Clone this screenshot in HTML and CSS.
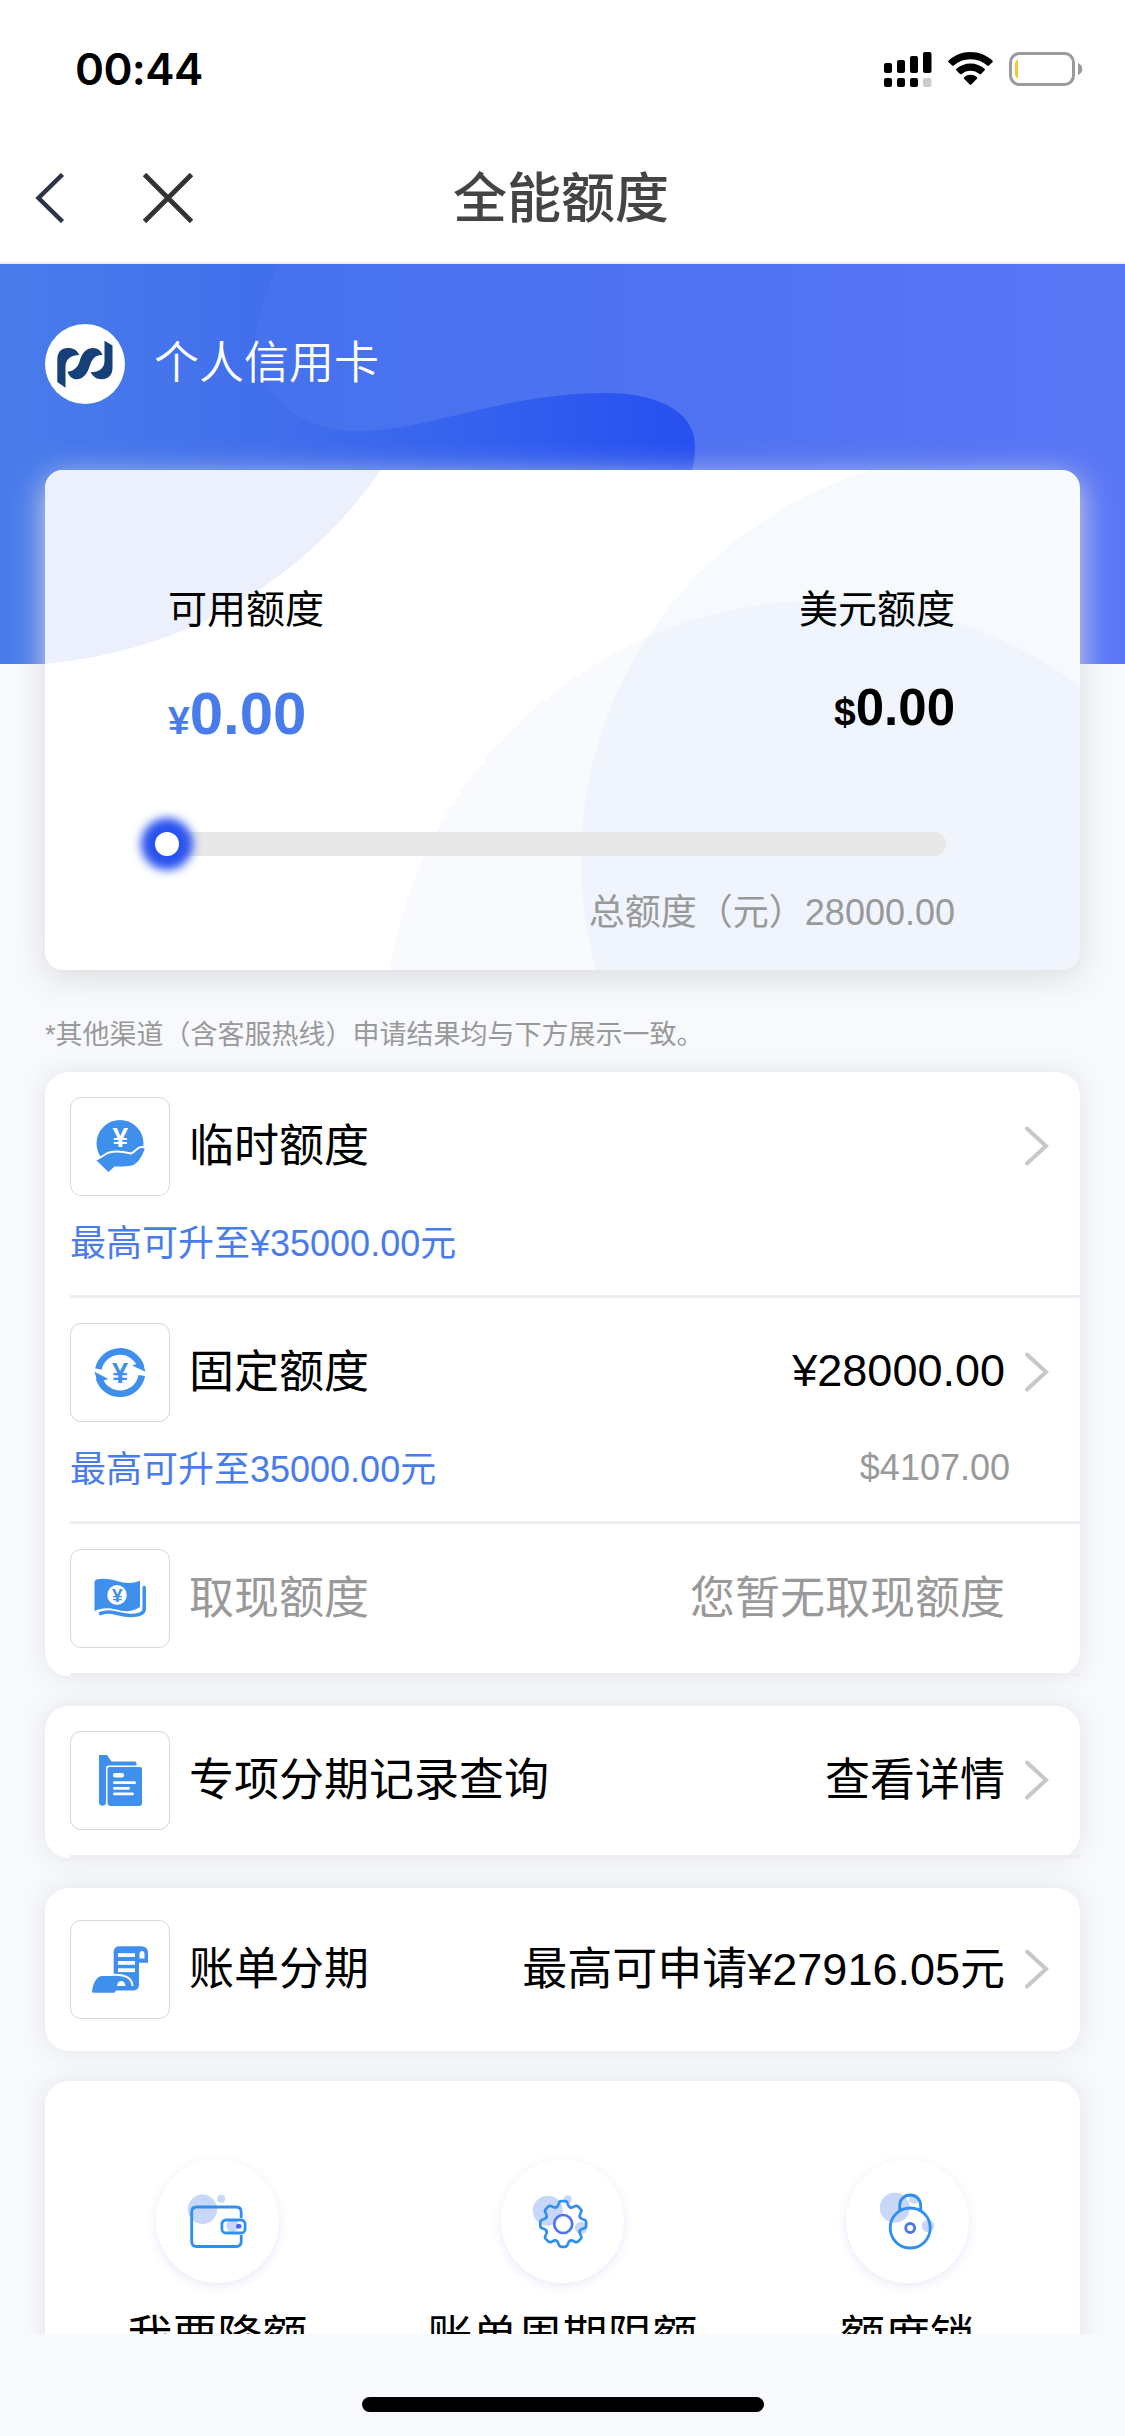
FILE: index.html
```html
<!DOCTYPE html>
<html lang="zh-CN">
<head>
<meta charset="utf-8">
<title>全能额度</title>
<link rel="stylesheet" href="styles.css">
</head>
<body>
<div class="phone">
  <header class="status">
    <span class="status-time">00:44</span>
    <span class="status-icons">
      <svg width="48" height="38" viewBox="0 0 48 38">
        <g fill="#000">
          <rect x="0" y="13" width="8" height="10" rx="2"/><rect x="13" y="10" width="8" height="13" rx="2"/><rect x="26" y="6" width="8" height="17" rx="2"/><rect x="39" y="2" width="8.500" height="21" rx="2"/>
          <rect x="0" y="28" width="8" height="9" rx="2"/><rect x="13" y="28" width="8" height="9" rx="2"/><rect x="26" y="28" width="8" height="9" rx="2"/>
        </g>
        <rect x="39" y="28" width="8.500" height="9" rx="2" fill="#ccc"/>
      </svg>
      <svg width="45" height="34" viewBox="0 0 45 34">
        <path d="M22.500 0C31 0 38.500 3.200 44.300 8.500a1.200 1.200 0 0 1 0 1.800l-3.400 3.300a1.200 1.200 0 0 1-1.700 0A24.500 24.500 0 0 0 22.500 7.200 24.500 24.500 0 0 0 5.800 13.600a1.200 1.200 0 0 1-1.700 0L.7 10.300a1.200 1.200 0 0 1 0-1.800C6.500 3.200 14 0 22.500 0z"/>
        <path d="M22.500 11.500c5.300 0 10.200 2 14 5.300a1.200 1.200 0 0 1 0 1.800l-3.500 3.400a1.200 1.200 0 0 1-1.600 0 13.500 13.500 0 0 0-17.800 0 1.200 1.200 0 0 1-1.600 0l-3.500-3.400a1.200 1.200 0 0 1 0-1.800c3.800-3.300 8.700-5.300 14-5.300z"/>
        <path d="M22.500 22.800c2.300 0 4.500.8 6.200 2.200a1.200 1.200 0 0 1 0 1.900l-5.400 5.500a1.200 1.200 0 0 1-1.600 0l-5.400-5.500a1.200 1.200 0 0 1 0-1.900 9.800 9.800 0 0 1 6.200-2.200z"/>
      </svg>
      <svg width="74" height="34" viewBox="0 0 74 34">
        <rect x="1.500" y="1.500" width="63" height="31" rx="9" fill="none" stroke="#9b9b9b" stroke-width="3"/>
        <path d="M69 11v12c2.600-1 4.300-3.300 4.300-6s-1.700-5-4.300-6z" fill="#9b9b9b"/>
        <path d="M9 7.500v19q-3-1-3-5v-9q0-4 3-5z" fill="#fbc72f"/>
      </svg>
    </span>
  </header>

  <nav class="nav">
    <span class="nav-actions">
      <svg width="30" height="50" viewBox="0 0 30 50"><path d="M27.500 1.500 3.500 25l24 23.500" fill="none" stroke="#2e3448" stroke-width="4.500"/></svg>
      <svg width="50" height="50" viewBox="0 0 50 50"><path d="M1.500 1.500l47 47M48.500 1.500l-47 47" fill="none" stroke="#333" stroke-width="4.800"/></svg>
    </span>
    <h1 class="nav-title">全能额度</h1>
  </nav>

  <main class="content">
    <section class="hero">
      <svg class="hero-art" width="1125" height="400" viewBox="0 0 1125 400">
        <defs>
          <linearGradient id="sky" x1="0" y1="0" x2="1" y2="0"><stop offset="0" stop-color="#497ceb"/><stop offset=".25" stop-color="#416eec"/><stop offset=".45" stop-color="#335fef"/><stop offset=".62" stop-color="#264ff0"/></linearGradient>
          <linearGradient id="wave" x1="0" y1="0" x2="1" y2="0"><stop offset="0" stop-color="#4672ed"/><stop offset=".5" stop-color="#4f72f1"/><stop offset="1" stop-color="#5a77f6"/></linearGradient>
        </defs>
        <rect width="1125" height="400" fill="url(#sky)"/>
        <path d="M280 0C260 35 251 75 260 102C270 140 305 167 358 167C430 167 500 129 606 129C655 129 695 146 695 182C695 235 650 300 640 400H1125V0z" fill="url(#wave)"/>
      </svg>
      <div class="owner">
        <svg width="80" height="80" viewBox="0 0 80 80">
          <circle cx="40" cy="40" r="40" fill="#fff"/>
          <g fill="#173f78">
            <path d="M12.300 36C12.300 28 16 24 23 24C29 24 32 26.500 34.300 31C26 31 20.500 35 20.500 43V63.700L12.300 58z"/>
            <path d="M22.500 47.700C30 47 33.500 42 35 36C37.500 28 42 24 48 24C53 24 56 27 57.500 31C48 31 46.500 37 44 44C41.500 51 37 55.300 32 55.300C27 55.300 24 52 22.500 47.700z"/>
            <path d="M59.500 16.700L67.500 21.500V44C67.500 51 63 55.300 57 55.300C51 55.300 48 52.500 45.500 48.300C54 48.500 59.500 44 59.500 37z"/>
          </g>
        </svg>
        <span>个人信用卡</span>
      </div>
    </section>

    <section class="quota">
      <svg class="quota-art" width="1035" height="500" viewBox="45 470 1035 500">
        <circle cx="10" cy="215" r="450" fill="#ecf0fc"/>
        <circle cx="988" cy="860" r="407" fill="#5591eb" fill-opacity=".05"/>
        <circle cx="821" cy="1037" r="436" fill="#5591eb" fill-opacity=".045"/>
      </svg>
      <div class="quota-row">
        <div>
          <div class="quota-label">可用额度</div>
          <div class="quota-cny"><small>¥</small>0.00</div>
        </div>
        <div class="quota-right">
          <div class="quota-label">美元额度</div>
          <div class="quota-usd"><small>$</small>0.00</div>
        </div>
      </div>
      <div class="track"><span class="thumb"></span></div>
      <div class="total">总额度（元）28000.00</div>
    </section>

    <p class="note">*其他渠道（含客服热线）申请结果均与下方展示一致。</p>

    <section class="card">
      <div class="item item-tall">
        <div class="line">
          <span class="tile"><svg width="100" height="99" viewBox="0 0 100 99">
            <circle cx="50" cy="46.500" r="23.500" fill="#3f8fec"/>
            <path d="M35 57.500C42 52.500 53 54.500 61 56.500C65 55 67 50.500 71 50C74 49.600 76 50.500 75.500 52.500C73 60 70 65 64 69C58 71.500 50 70 44.800 70.500L38.500 76.500L25 63.500C28 62 31 60 35 57.500z" fill="#3f8fec" stroke="#fff" stroke-width="2"/>
            <text x="50.200" y="50.300" class="yen" font-size="28" fill="#fff">¥</text>
          </svg></span>
          <span class="name">临时额度</span>
          <svg class="chev" width="26" height="42" viewBox="0 0 26 42"><path d="M3 2.500l19 17.500L3 37.500"/></svg>
        </div>
        <div class="sub"><span>最高可升至¥35000.00元</span></div>
      </div>
      <div class="item item-tall">
        <div class="line">
          <span class="tile"><svg width="100" height="99" viewBox="0 0 100 99">
            <g fill="none" stroke="#3f8fec" stroke-width="6.600"><path d="M28.400 46A22 22 0 0 1 71 44"/><path d="M71.800 52.500A22 22 0 0 1 29 55"/></g>
            <g fill="#3f8fec"><path d="M62 42.500L72.500 39L75.500 48.700z"/><path d="M38.300 56L27.500 59.500L24.500 48.700z"/></g>
            <text x="50" y="59.700" class="yen" font-size="29" fill="#3f8fec">¥</text>
          </svg></span>
          <span class="name">固定额度</span>
          <span class="value value-number">¥28000.00</span>
          <svg class="chev" width="26" height="42" viewBox="0 0 26 42"><path d="M3 2.500l19 17.500L3 37.500"/></svg>
        </div>
        <div class="sub"><span>最高可升至35000.00元</span><span class="usd">$4107.00</span></div>
      </div>
      <div class="item">
        <div class="line muted">
          <span class="tile"><svg width="100" height="99" viewBox="0 0 100 99">
            <path d="M24.500 33Q24.500 29.700 33 29.700C44 29.700 50 34 59 34Q64 34 70 31.700V58C60 64.500 52 62 46 60.500C38 58.500 32 58.500 24.500 62z" fill="#3f8fec"/>
            <ellipse cx="47" cy="46" rx="9.800" ry="10" fill="#fff"/>
            <text x="47.200" y="52.700" class="yen" font-size="19" fill="#3f8fec">¥</text>
            <path d="M74.200 38.500V60C74.200 64.500 69 66.500 60 66.500C47 66 42 60.500 30.500 64.500" fill="none" stroke="#3f8fec" stroke-width="3.500" stroke-linecap="round"/>
          </svg></span>
          <span class="name">取现额度</span>
          <span class="value value-plain">您暂无取现额度</span>
        </div>
      </div>
    </section>

    <section class="card">
      <div class="item">
        <div class="line">
          <span class="tile"><svg width="100" height="99" viewBox="0 0 100 99">
            <path d="M29 24H37L41.500 30.500H65Q66.600 30.500 66.600 33V34.500H38.500Q36 34.500 36 37V71Q36 74.700 32.500 74.700Q29 74.700 29 71z" fill="#3f8fec"/>
            <path d="M40 36H70Q72 36 72 38V72Q72 75 69 75H39.500L37.500 73V38Q37.500 36 40 36z" fill="#3f8fec"/>
            <g fill="#fff"><rect x="43" y="42" width="11" height="4.500" rx="2"/><rect x="43" y="50.300" width="23" height="2.800" rx="1.400"/><rect x="43" y="56" width="17" height="2.800" rx="1.400"/><rect x="43" y="61.500" width="21" height="2.800" rx="1.400"/></g>
          </svg></span>
          <span class="name">专项分期记录查询</span>
          <span class="value">查看详情</span>
          <svg class="chev" width="26" height="42" viewBox="0 0 26 42"><path d="M3 2.500l19 17.500L3 37.500"/></svg>
        </div>
      </div>
    </section>

    <section class="card card-bill">
      <div class="line">
        <span class="tile"><svg width="100" height="99" viewBox="0 0 100 99">
          <path d="M43.700 56V32Q43.700 26.300 50 26.300H71Q78 26.300 78 33V42.700H69V65Q69 70.500 62 70.500H45V60z" fill="#3f8fec"/>
          <path d="M69.500 38.500V34.500Q69.500 31 72 31Q74.500 31 74.500 34.500V38.500z" fill="#fff"/>
          <g fill="#fff"><rect x="48" y="33.200" width="17" height="3.800"/><rect x="48" y="41" width="17" height="3.800"/><rect x="48" y="48.300" width="17" height="3.800"/></g>
          <path d="M22 71.500C23 64 26 56 33 56H48C57 56 61.500 60 62 66H56Q55 61.500 51.500 61.500Q48 61.500 47 66.500H54L46 70.500L44.500 72.700H23.500Q22 72.700 22 71.500z" fill="#3f8fec"/>
          <path d="M42 54.800C56 54 62 58 62.500 66" fill="none" stroke="#fff" stroke-width="2"/>
          <path d="M47 66Q47.500 61 51.500 61Q54.500 61 55.500 66z" fill="#fff"/>
        </svg></span>
        <span class="name">账单分期</span>
        <span class="value">最高可申请¥27916.05元</span>
        <svg class="chev" width="26" height="42" viewBox="0 0 26 42"><path d="M3 2.500l19 17.500L3 37.500"/></svg>
      </div>
    </section>

    <section class="card tools">
      <div class="tool">
        <span class="disc"><svg width="124" height="124" viewBox="-62 -62 124 124">
          <g fill="#c8d7f8"><circle cx="-14.500" cy="-11.700" r="14.700"/><circle cx="4.200" cy="-22.300" r="4"/><circle cx="15.500" cy="5" r="6.200"/></g>
          <g fill="none" stroke="#2f8fee" stroke-width="2.800"><path d="M24.200 -3V-9Q24.200 -14 19.200 -14H-20.300Q-25.300 -14 -25.300 -9V20.500Q-25.300 25.500 -20.300 25.500H19.200Q24.200 25.500 24.200 20.500V14"/><rect x="4.900" y="-1" width="23.200" height="13" rx="4"/></g>
          <rect x="19" y="3" width="5.500" height="4.500" rx="2" fill="#4a5ff0"/>
        </svg></span>
        <span class="tool-name">我要降额</span>
      </div>
      <div class="tool">
        <span class="disc"><svg width="124" height="124" viewBox="-62 -62 124 124">
          <defs><path id="tooth" d="M-6.890 -16.630C-5.200 -17.300 -4.900 -18.600 -4.500 -20.300Q-4 -22.700 -1.800 -22.900H1.800Q4 -22.700 4.500 -20.300C4.900 -18.600 5.200 -17.300 6.890 -16.630"/></defs>
          <g fill="#c8d7f8"><circle cx="-14.200" cy="-10.300" r="15"/><circle cx="5.800" cy="-21.700" r="4"/><circle cx="19.200" cy="7" r="6.200"/></g>
          <g transform="translate(1.200 3)" fill="none" stroke="#2f8fee" stroke-width="2.700" stroke-linecap="round">
            <use href="#tooth"/><use href="#tooth" transform="rotate(45)"/><use href="#tooth" transform="rotate(90)"/><use href="#tooth" transform="rotate(135)"/><use href="#tooth" transform="rotate(180)"/><use href="#tooth" transform="rotate(225)"/><use href="#tooth" transform="rotate(270)"/><use href="#tooth" transform="rotate(315)"/>
            <circle r="9" stroke="#4a74f2" fill="#fff" fill-opacity=".8"/>
          </g>
        </svg></span>
        <span class="tool-name">账单周期限额</span>
      </div>
      <div class="tool">
        <span class="disc"><svg width="124" height="124" viewBox="-62 -62 124 124">
          <g fill="#c8d7f8"><circle cx="-12.200" cy="-13.300" r="15"/><circle cx="21" cy="5" r="6.200"/><circle cx="7" cy="-22" r="5"/></g>
          <g fill="none" stroke="#2f8fee" stroke-width="2.800"><circle cx="3.200" cy="7" r="20"/><path d="M-7.300 -10V-15.500A10.500 10.500 0 0 1 13.700 -15.500V-10"/></g>
          <circle cx="3.200" cy="7" r="4.500" fill="#fff" stroke="#4a74f2" stroke-width="2.800"/>
        </svg></span>
        <span class="tool-name">额度锁</span>
      </div>
    </section>
  </main>

  <footer class="home"><span class="home-bar"></span></footer>
</div>
</body>
</html>
```

FILE: styles.css
```css
* { box-sizing: border-box; margin: 0; padding: 0; }

body {
  background: #f7f9fd;
  font-family: "Liberation Sans", "Noto Sans CJK SC", sans-serif;
  color: #000;
}

svg { display: block; }

.phone {
  width: 1125px;
  height: 2436px;
  display: flex;
  flex-direction: column;
  overflow: hidden;
}

.status {
  height: 136px;
  flex: none;
  background: #fff;
  display: flex;
  align-items: center;
  justify-content: space-between;
  padding: 2px 42px 0 75px;
}

.status-time {
  font: 600 44px/60px Inter, sans-serif;
  letter-spacing: -0.6px;
}

.status-icons {
  display: flex;
  align-items: center;
  gap: 16px;
}

.nav {
  height: 128px;
  flex: none;
  background: #fff;
  border-bottom: 2px solid #eee;
  display: grid;
  grid-template-columns: 1fr auto 1fr;
  align-items: center;
}

.nav-actions {
  display: flex;
  gap: 78px;
  padding: 0 0 2px 35px;
}

.nav-title {
  padding-right: 3px;
  font-size: 54px;
  line-height: 64px;
  font-weight: 500;
  color: #444;
}

.content {
  height: 2070px;
  flex: none;
  overflow: hidden;
}

.hero {
  position: relative;
  height: 400px;
  padding: 60px 45px;
}

.hero-art {
  position: absolute;
  left: 0;
  top: 0;
}

.owner {
  position: relative;
  display: flex;
  align-items: center;
  gap: 29px;
  color: #fff;
  font-size: 45px;
  line-height: 82px;
  font-weight: 350;
  height: 80px;
}

.quota {
  position: relative;
  width: 1035px;
  height: 500px;
  margin: -194px auto 0;
  padding-top: 116px;
  border-radius: 18px;
  background: #fff;
  box-shadow: 0 8px 32px #dcdcde;
}

.quota-art {
  position: absolute;
  left: 0;
  top: 0;
  border-radius: 18px;
}

.quota-row {
  position: relative;
  display: flex;
  justify-content: space-between;
  padding: 0 125px 0 123px;
}

.quota-right { text-align: right; }

.quota-label {
  font-size: 39px;
  line-height: 48px;
}

.quota-cny,
.quota-usd {
  margin-top: 46px;
  font-weight: 700;
}

.quota-cny {
  font-size: 60px;
  line-height: 68px;
  color: #497ceb;
}

.quota-usd {
  font-size: 51px;
  line-height: 56px;
}

.quota small {
  font-size: 39px;
  line-height: 1;
}

.track {
  position: relative;
  height: 24px;
  margin: 84px 134px 0 110px;
  border-radius: 12px;
  background: #e8e8e8;
}

.thumb {
  display: block;
  width: 24px;
  height: 24px;
  border-radius: 50%;
  background: #fff;
  box-shadow: 0 0 10px 14px #2a52ee;
}

.total {
  position: relative;
  margin: 35px 125px 0 0;
  text-align: right;
  font-size: 36px;
  line-height: 44px;
  color: #999;
}

.note {
  margin: 45px 45px 17px;
  font-size: 27px;
  line-height: 40px;
  color: #999;
}

.card {
  width: 1035px;
  margin: 0 auto 30px;
  padding-left: 25px;
  border-radius: 24px;
  background: #fff;
  box-shadow: 0 0 24px #e3e4e7;
}

.item {
  height: 152px;
  padding: 25px 0 0;
  border-bottom: 3px solid #eee;
}

.item-tall { height: 226px; }

.line {
  display: flex;
  align-items: center;
  height: 99px;
  padding-right: 30px;
}

.tile {
  width: 100px;
  height: 99px;
  flex: none;
  border: 1px solid #d9d9d9;
  border-radius: 11px;
}

.tile svg { margin: -1px; }

.yen {
  font-family: "Liberation Sans", sans-serif;
  font-weight: 700;
  text-anchor: middle;
}

.name {
  margin-left: 19px;
  font-size: 45px;
  line-height: 60px;
}

.value {
  margin-left: auto;
  font-size: 45px;
  line-height: 60px;
}

.value-plain { margin-right: 45px; }

.value-number { padding-bottom: 4px; }

.value + .chev { margin-left: 19px; }

.name + .chev { margin-left: auto; }

.chev path {
  fill: none;
  stroke: #c7c7cc;
  stroke-width: 4;
  stroke-linecap: round;
}

.muted { color: #999; }

.sub {
  display: flex;
  justify-content: space-between;
  margin-top: 23px;
  padding-right: 70px;
  font-size: 36px;
  line-height: 50px;
  color: #497ceb;
}

.usd {
  color: #999;
  line-height: 46px;
}

.card-bill {
  height: 163px;
  padding-top: 32px;
}

.tools {
  display: grid;
  grid-template-columns: repeat(3, 1fr);
  height: 400px;
  margin: 0 auto;
  padding: 78px 0 0;
}

.tool {
  display: flex;
  flex-direction: column;
  align-items: center;
}

.disc {
  border-radius: 50%;
  background: #fff;
  box-shadow: 0 3px 12px #ebe9fa;
}

.tool svg { margin-left: -1px; }

.tool-name {
  margin-top: 25px;
  font-size: 45px;
  line-height: 60px;
}

.home {
  flex: 1;
  display: flex;
  justify-content: center;
  align-items: flex-start;
  padding-top: 63px;
  position: relative;
  background: #f7f9fd;
}

.home-bar {
  width: 402px;
  height: 15px;
  border-radius: 8px;
  background: #000;
}
```
